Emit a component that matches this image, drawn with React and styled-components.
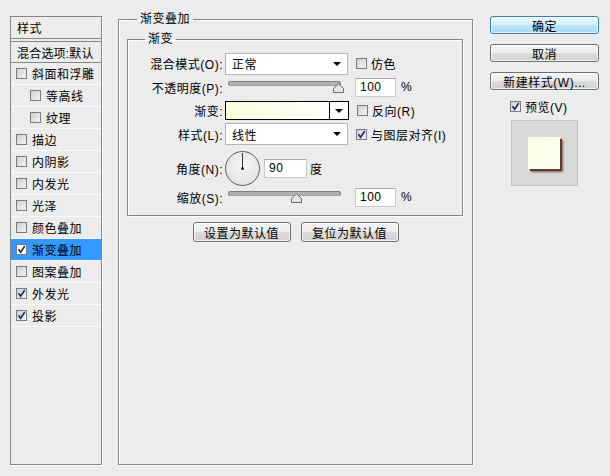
import React from 'react';
import styled, { createGlobalStyle } from 'styled-components';

const Global = createGlobalStyle`
  html, body { margin: 0; padding: 0; background: #ececec; }
  body {
    font-family: "Liberation Sans", "Noto Sans CJK SC", sans-serif;
    font-size: 12px; color: #000; letter-spacing: 0.5px;
  }
  * { box-sizing: border-box; }
`;

const Dialog = styled.div`
  display: flex; align-items: flex-start;
  width: 610px; height: 476px; padding-left: 10px;
  background: #ececec; overflow: hidden;
`;

/* ---------- left list ---------- */
const StyleList = styled.div`
  margin-top: 16px; width: 92px; height: 449px;
  border: 1px solid #858585;
  box-shadow: 1px 1px 0 #fff;
  display: flex; flex-direction: column;
`;

const ListHead = styled.div`
  height: 22px; padding-left: 6px;
  display: flex; align-items: center;
  border-bottom: 1px solid #858585;
`;

const BlendRow = styled.div`
  margin-top: 2px; height: 22px; padding-left: 6px;
  display: flex; align-items: center; white-space: nowrap; letter-spacing: 0.2px;
  border-top: 1px solid #858585; border-bottom: 1px solid #858585;
`;

const EffectRow = styled.div`
  height: 22px; display: flex; align-items: center; gap: 5px;
  padding-left: ${p => (p.$indent ? 19 : 5)}px;
  border-bottom: 1px solid #f9f9f9;
  background: ${p => (p.$active ? '#3399ff' : 'transparent')};
`;

const Box = styled.span`
  flex: none; width: 11px; height: 11px;
  border: 1px solid #7b7b7b;
  background: ${p => (p.$white ? '#fff' : 'linear-gradient(135deg, #cfcfcf, #f4f4f4)')};
  display: flex; align-items: center; justify-content: center;
`;

const Check = ({ checked, white }) => (
  <Box $white={white}>
    {checked && (
      <svg width="9" height="9" viewBox="0 0 9 9">
        <path d="M1.5 4.2 L3.6 7.3 L7.8 1" fill="none" stroke="#1f2a6e" strokeWidth="1.6" />
      </svg>
    )}
  </Box>
);

const effects = [
  { label: '斜面和浮雕' },
  { label: '等高线', indent: true },
  { label: '纹理', indent: true },
  { label: '描边' },
  { label: '内阴影' },
  { label: '内发光' },
  { label: '光泽' },
  { label: '颜色叠加' },
  { label: '渐变叠加', checked: true, active: true },
  { label: '图案叠加' },
  { label: '外发光', checked: true },
  { label: '投影', checked: true },
];

/* ---------- group boxes ---------- */
const Group = styled.fieldset`
  margin: 12px 0 0 16px; padding: 0;
  width: 355px; height: 453px;
  border: 1px solid #858585;
  box-shadow: 1px 1px 0 #fff, inset 1px 1px 0 #fff;
  min-inline-size: 0;
`;

const SubGroup = styled.fieldset`
  margin: 6px 9px 0 8px; padding: 6px 0 7px 0;
  border: 1px solid #858585;
  box-shadow: 1px 1px 0 #fff, inset 1px 1px 0 #fff;
  min-inline-size: 0;
`;

const Legend = styled.legend`
  margin-left: ${p => p.$indent}px; padding: 0 3px;
  line-height: 14px; font-size: 12px;
`;

const Row = styled.div`
  display: flex; align-items: center;
  height: ${p => p.$h}px;
  margin-top: ${p => p.$mt || 0}px;
`;

const Label = styled.span`
  width: 95px; margin-right: 2px; text-align: right; white-space: nowrap;
`;

const SelectBox = styled.div`
  width: 123px; height: 22px; background: #fff;
  border: 1px solid #b5b5b5;
  display: flex; align-items: center; justify-content: space-between;
  padding: 0 6px 0 6px;
`;

const Arrow = styled.span`
  width: 0; height: 0;
  border-left: 4px solid transparent; border-right: 4px solid transparent;
  border-top: 4px solid #000;
`;

const Select = ({ value }) => (
  <SelectBox>
    <span>{value}</span>
    <Arrow />
  </SelectBox>
);

const CheckLabel = styled.label`
  margin-left: 8px; display: flex; align-items: center; gap: 4px; white-space: nowrap;
`;

const Field = styled.div`
  width: ${p => p.$w}px; height: 19px; margin-left: ${p => p.$ml}px;
  background: #fff; border: 1px solid #c9c9c9; border-top-color: #a9a9a9;
  display: flex; align-items: center; padding-left: 4px;
`;

const Unit = styled.span`
  margin-left: ${p => p.$ml}px;
`;

const SliderWrap = styled.div`
  position: relative; width: 123px; height: 16px;
`;

const Track = styled.div`
  position: absolute; left: 3px; top: 2px; width: 113px; height: 5px;
  border-radius: 3px; background: #b1b1b1;
  border: 1px solid #7d7d7d; border-bottom-color: #a0a0a0;
`;

const Thumb = styled.svg`
  position: absolute; top: 4px; margin-left: -5px;
`;

const Slider = ({ value }) => (
  <SliderWrap>
    <Track />
    <Thumb width="11" height="10" viewBox="0 0 11 10" style={{ left: `${3 + (110 * value) / 100}px` }}>
      <path d="M0.5 9.5 V5.5 L5.5 0.8 L10.5 5.5 V9.5 Z" fill="#e6e6e6" stroke="#6a6a6a" />
    </Thumb>
  </SliderWrap>
);

const GradientBox = styled.div`
  width: 124px; height: 19px; border: 1px solid #000;
  display: flex;
`;

const Ramp = styled.div`
  flex: 1; background: linear-gradient(to right, #f9fed9, #ffffff);
  border-right: 1px solid #000;
`;

const RampDrop = styled.div`
  width: 18px; display: flex; align-items: center; justify-content: center; background: #fff;
`;

const Dial = styled.div`
  position: relative; width: 35px; height: 35px; border-radius: 50%;
  border: 1px solid #5e5e5e;
  background: radial-gradient(circle at 50% 40%, #f6f6f6 0%, #e4e4e4 70%, #d4d4d4 100%);
`;

const Needle = styled.span`
  position: absolute; left: 16px; top: 1px; width: 1px; height: 16px; background: #333;
`;

const Hub = styled.span`
  position: absolute; left: 15px; top: 15px; width: 3px; height: 3px; border-radius: 50%; background: #222;
`;

const ButtonRow = styled.div`
  display: flex; justify-content: center; gap: 10px; margin-top: 6px;
`;

const Button = styled.button`
  width: ${p => p.$w}px; height: ${p => p.$h}px; padding: 0;
  font: inherit; color: #000; cursor: default; letter-spacing: 0.5px;
  border-radius: 3px;
  border: 1px solid ${p => (p.$primary ? '#3c7fb1' : '#707070')};
  background: ${p =>
    p.$primary
      ? 'linear-gradient(#eaf6fd 0%, #d9f0fc 50%, #bee6fd 51%, #a7d9f5 100%)'
      : 'linear-gradient(#f4f4f4 0%, #ececec 50%, #dcdcdc 51%, #d2d2d2 100%)'};
  box-shadow: inset 0 0 0 1px rgba(255,255,255,0.7);
`;

/* ---------- right column ---------- */
const Side = styled.div`
  margin: 16px 0 0 17px; width: 109px;
  display: flex; flex-direction: column; gap: 10px;
`;

const PreviewToggle = styled.label`
  margin: 0 0 0 20px; display: flex; align-items: center; gap: 4px; height: 12px;
`;

const PreviewWell = styled.div`
  margin: -2px 0 0 21px; width: 67px; height: 66px;
  background: #d9d9d9; border: 1px solid #c4c4c4;
  display: flex; align-items: center; justify-content: center;
`;

const Swatch = styled.div`
  width: 32px; height: 32px; margin: 0 2px 0 0;
  background: linear-gradient(135deg, #fbfde4, #fffff4);
  box-shadow: 2px 2px 0 #5e3a2a, 3px 3px 2px rgba(90, 50, 30, 0.7);
`;

export default function App() {
  return (
    <>
      <Global />
      <Dialog>
        <StyleList>
          <ListHead>样式</ListHead>
          <BlendRow>混合选项:默认</BlendRow>
          {effects.map(e => (
            <EffectRow key={e.label} $indent={e.indent} $active={e.active}>
              <Check checked={e.checked} white={e.active} />
              <span>{e.label}</span>
            </EffectRow>
          ))}
        </StyleList>

        <Group>
          <Legend $indent={18}>渐变叠加</Legend>
          <SubGroup>
            <Legend $indent={17}>渐变</Legend>
            <Row $h={23}>
              <Label>混合模式(O):</Label>
              <Select value="正常" />
              <CheckLabel><Check />仿色</CheckLabel>
            </Row>
            <Row $h={24}>
              <Label>不透明度(P):</Label>
              <Slider value={100} />
              <Field $w={41} $ml={7}>100</Field>
              <Unit $ml={5}>%</Unit>
            </Row>
            <Row $h={23}>
              <Label>渐变:</Label>
              <GradientBox>
                <Ramp />
                <RampDrop><Arrow /></RampDrop>
              </GradientBox>
              <CheckLabel><Check />反向(R)</CheckLabel>
            </Row>
            <Row $h={24}>
              <Label>样式(L):</Label>
              <Select value="线性" />
              <CheckLabel><Check checked />与图层对齐(I)</CheckLabel>
            </Row>
            <Row $h={36} $mt={4}>
              <Label>角度(N):</Label>
              <Dial><Needle /><Hub /></Dial>
              <Field $w={43} $ml={4}>90</Field>
              <Unit $ml={3}>度</Unit>
            </Row>
            <Row $h={22}>
              <Label>缩放(S):</Label>
              <Slider value={62} />
              <Field $w={41} $ml={7}>100</Field>
              <Unit $ml={5}>%</Unit>
            </Row>
          </SubGroup>
          <ButtonRow>
            <Button $w={98} $h={20}>设置为默认值</Button>
            <Button $w={98} $h={20}>复位为默认值</Button>
          </ButtonRow>
        </Group>

        <Side>
          <Button $w={109} $h={18} $primary>确定</Button>
          <Button $w={109} $h={18}>取消</Button>
          <Button $w={109} $h={18}>新建样式(W)...</Button>
          <PreviewToggle><Check checked />预览(V)</PreviewToggle>
          <PreviewWell><Swatch /></PreviewWell>
        </Side>
      </Dialog>
    </>
  );
}
